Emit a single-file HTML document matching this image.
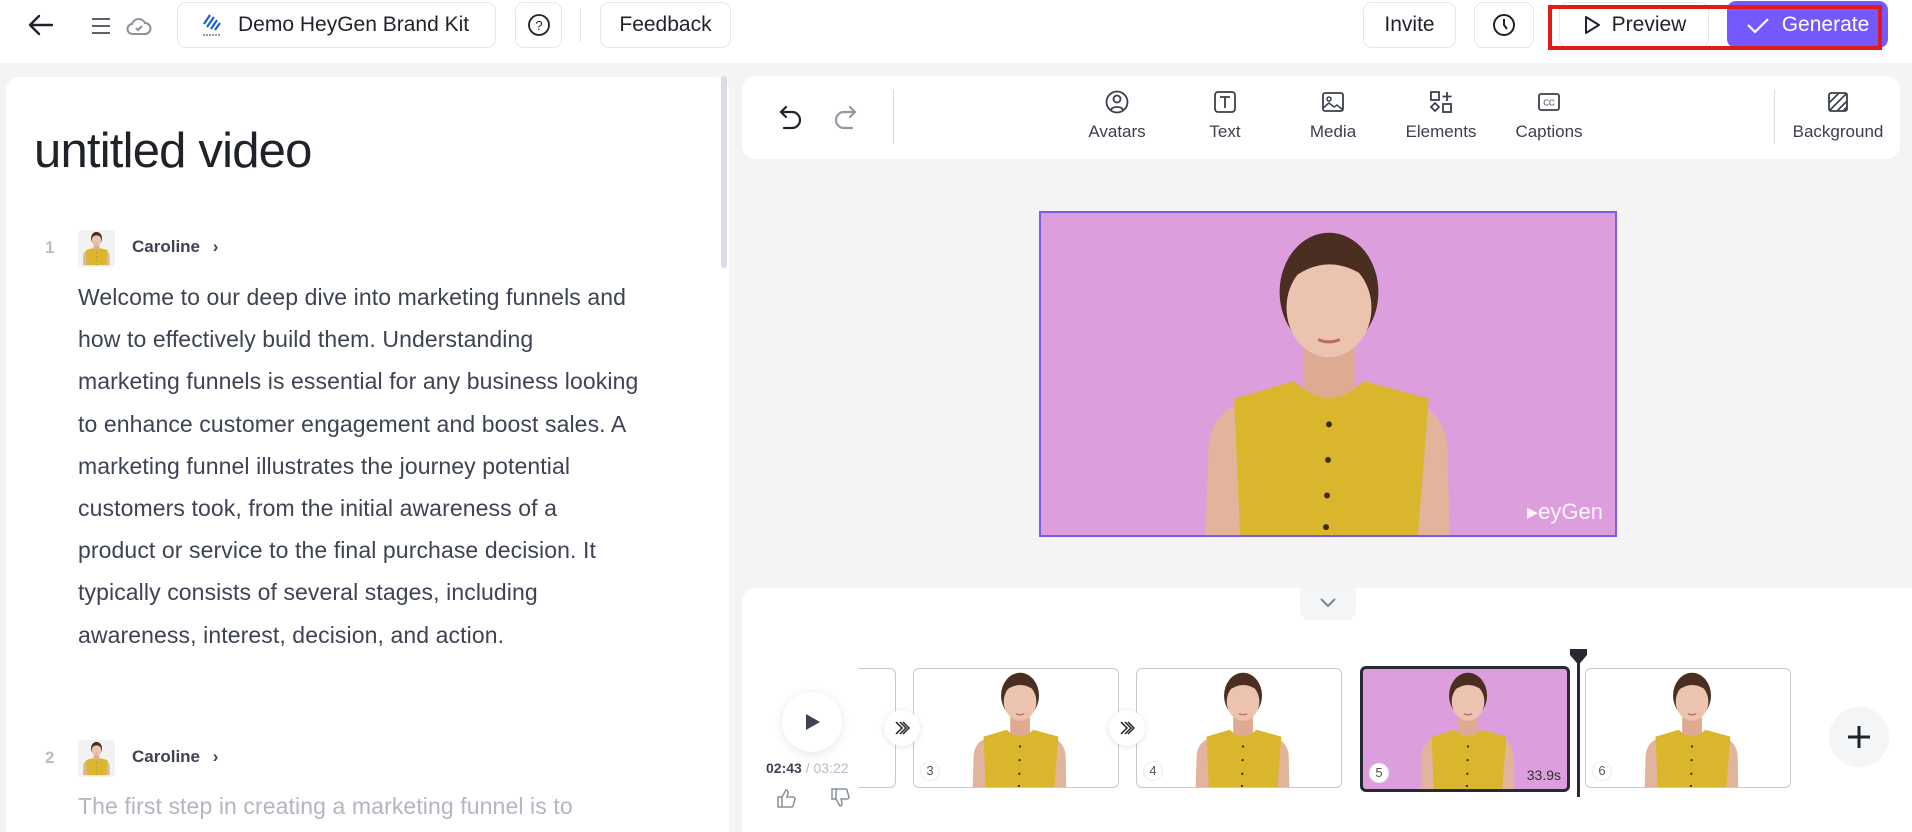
<!DOCTYPE html>
<html style="width:1912px;height:832px;overflow:hidden"><head><meta charset="utf-8"><style>
*{box-sizing:border-box;margin:0;padding:0}
body{width:1912px;height:832px;overflow:hidden;background:#f4f4f4;font-family:"Liberation Sans",sans-serif;color:#1f2329;position:relative}
.a{position:absolute}
.top{left:0;top:0;width:1912px;height:63px;background:#fff}
.btn{position:absolute;border:1px solid #e6e7ea;border-radius:9px;background:#fff;display:flex;align-items:center;justify-content:center;font-size:21px;color:#1f2329}
.card{background:#fff;border-radius:14px}
.tool{position:absolute;top:90px;width:100px;text-align:center;font-size:17px;color:#3a3f4a}
.tool svg{display:block;margin:0 auto 8px}
.p{font-size:23px;line-height:42.2px;color:#3d4352;letter-spacing:0.1px;white-space:nowrap}
.clip{position:absolute;top:668px;height:120px;border:1px solid #c9c7d3;border-radius:6px;background:#fff;overflow:hidden}
.num{position:absolute;left:6px;bottom:6px;width:20px;height:20px;border-radius:10px;background:#fff;border:1px solid #eee;font-size:13px;color:#555;text-align:center;line-height:18px}
</style></head><body>
<svg width="0" height="0" style="position:absolute"><defs>
<g id="pp">
<path d="M165 326 L168 235 Q172 200 205 192 L375 192 Q405 200 410 235 L412 326Z" fill="#e3b49c"/>
<ellipse cx="290" cy="80" rx="50" ry="60" fill="#4a2e22"/>
<rect x="264" y="120" width="52" height="70" fill="#dfaa92"/>
<ellipse cx="290" cy="96" rx="43" ry="50" fill="#ecc3ae"/>
<path d="M248 70 Q290 34 334 70 Q328 38 290 34 Q252 38 248 70Z" fill="#4a2e22"/>
<path d="M194 188 L255 170 Q290 205 325 170 L391 188 L380 326 L200 326Z" fill="#d9b62c"/>
<circle cx="290" cy="214" r="3" fill="#3a2a1a"/><circle cx="289" cy="250" r="3" fill="#3a2a1a"/><circle cx="288" cy="286" r="3" fill="#3a2a1a"/><circle cx="287" cy="318" r="3" fill="#3a2a1a"/>
<path d="M279 128 Q290 133 301 128" stroke="#b86a6a" stroke-width="3" fill="none"/>
</g></defs></svg>

<div class="a top"></div>
<svg class="a" style="left:28px;top:14px" width="26" height="22" viewBox="0 0 26 22"><path d="M24 11H3M11 2L2 11l9 9" stroke="#1f2329" stroke-width="2.4" fill="none" stroke-linecap="round" stroke-linejoin="round"/></svg>
<svg class="a" style="left:90px;top:16px" width="22" height="20"><path d="M2 3h18M2 10h18M2 17h18" stroke="#5b606b" stroke-width="2"/></svg>
<svg class="a" style="left:126px;top:14px" width="26" height="24" viewBox="0 0 26 24"><path d="M7 20a5 5 0 0 1-1-10 7 7 0 0 1 13-1 5 5 0 0 1 0 11z" stroke="#8a8f99" stroke-width="2" fill="none"/><path d="M10 14l2 2 4-4" stroke="#8a8f99" stroke-width="2" fill="none"/></svg>
<div class="btn" style="left:177px;top:2px;width:319px;height:46px;justify-content:flex-start;padding-left:22px"><svg width="24" height="24" viewBox="0 0 24 24"><path d="M10 2l-6 9M14 4l-7 10M17 7l-6 9M20 10l-5 7" stroke="#1d5fd0" stroke-width="2.2"/><path d="M3 22h18" stroke="#333" stroke-width="1" stroke-dasharray="2 1"/></svg><span style="margin-left:14px">Demo HeyGen Brand Kit</span></div>
<div class="btn" style="left:515px;top:2px;width:47px;height:46px"><svg width="24" height="24"><circle cx="12" cy="12" r="10" stroke="#1f2329" stroke-width="1.8" fill="none"/><text x="12" y="17" text-anchor="middle" font-size="13" font-family="Liberation Sans" fill="#1f2329">?</text></svg></div>
<div class="a" style="left:580px;top:8px;width:1px;height:34px;background:#e3e4e8"></div>
<div class="btn" style="left:600px;top:2px;width:131px;height:46px">Feedback</div>
<div class="btn" style="left:1363px;top:2px;width:93px;height:46px">Invite</div>
<div class="btn" style="left:1474px;top:2px;width:60px;height:46px"><svg width="24" height="24"><circle cx="12" cy="12" r="10" stroke="#1f2329" stroke-width="2" fill="none"/><path d="M12 6v6l3 4" stroke="#1f2329" stroke-width="2" fill="none"/></svg></div>
<div class="btn" style="left:1559px;top:2px;width:150px;height:46px"><svg width="20" height="22" viewBox="0 0 20 22"><path d="M4 3l13 8-13 8z" stroke="#1f2329" stroke-width="2" fill="none" stroke-linejoin="round"/></svg><span style="margin-left:10px">Preview</span></div>
<div class="a" style="left:1727px;top:1px;width:161px;height:47px;background:#7559ff;border-radius:9px;color:#fff;font-size:21px;display:flex;align-items:center;justify-content:center"><svg width="24" height="18"><path d="M2 9l7 7L22 3" stroke="#fff" stroke-width="2.2" fill="none"/></svg><span style="margin-left:12px">Generate</span></div>
<div class="a" style="left:1548px;top:5px;width:334px;height:45px;border:4px solid #e01b1b"></div>

<div class="a card" style="left:6px;top:77px;width:723px;height:755px;border-radius:14px 14px 0 0"></div>
<div class="a" style="left:721px;top:76px;width:6px;height:192px;background:#dcdbe8;border-radius:3px"></div>
<div class="a" style="left:34px;top:123px;font-size:49px;letter-spacing:-0.8px;color:#1f2329">untitled video</div>
<div class="a" style="left:45px;top:238px;font-size:17px;color:#b8bcc4;font-weight:bold">1</div>
<svg class="a" style="left:78px;top:230px;border-radius:4px;background:#f2f2f2" width="37" height="37" viewBox="120 10 340 326"><use href="#pp"/></svg>
<div class="a" style="left:132px;top:237px;font-size:17px;font-weight:bold;color:#3d4352">Caroline <span style="margin-left:8px">›</span></div>
<div class="a p" style="left:78px;top:276px">Welcome to our deep dive into marketing funnels and<br>how to effectively build them. Understanding<br>marketing funnels is essential for any business looking<br>to enhance customer engagement and boost sales. A<br>marketing funnel illustrates the journey potential<br>customers took, from the initial awareness of a<br>product or service to the final purchase decision. It<br>typically consists of several stages, including<br>awareness, interest, decision, and action.</div>
<div class="a" style="left:45px;top:748px;font-size:17px;color:#b8bcc4;font-weight:bold">2</div>
<svg class="a" style="left:78px;top:740px;border-radius:4px;background:#f2f2f2" width="37" height="37" viewBox="120 10 340 326"><use href="#pp"/></svg>
<div class="a" style="left:132px;top:747px;font-size:17px;font-weight:bold;color:#3d4352">Caroline <span style="margin-left:8px">›</span></div>
<div class="a p" style="left:78px;top:785px;color:#b3b6bf">The first step in creating a marketing funnel is to</div>

<div class="a card" style="left:742px;top:76px;width:1158px;height:83px"></div>
<svg class="a" style="left:778px;top:104px" width="26" height="28" viewBox="0 0 26 28"><path d="M8 3L3 8l5 5M3 8h11a8 8 0 0 1 0 16H6" stroke="#1f2329" stroke-width="2.2" fill="none" stroke-linecap="round"/></svg>
<svg class="a" style="left:832px;top:104px" width="26" height="28" viewBox="0 0 26 28"><path d="M18 3l5 5-5 5M23 8H12a8 8 0 0 0 0 16h8" stroke="#9499a3" stroke-width="2.2" fill="none" stroke-linecap="round"/></svg>
<div class="a" style="left:893px;top:90px;width:1px;height:54px;background:#d8d9dd"></div>
<div class="tool" style="left:1067px"><svg width="24" height="24"><circle cx="12" cy="12" r="10.5" stroke="#3a3f4a" stroke-width="1.8" fill="none"/><circle cx="12" cy="9" r="3.5" stroke="#3a3f4a" stroke-width="1.8" fill="none"/><path d="M6 20c1-4 11-4 12 0" stroke="#3a3f4a" stroke-width="1.8" fill="none"/></svg>Avatars</div>
<div class="tool" style="left:1175px"><svg width="24" height="24"><rect x="2" y="2" width="20" height="20" rx="3" stroke="#3a3f4a" stroke-width="1.8" fill="none"/><path d="M7 7h10M12 7v11" stroke="#3a3f4a" stroke-width="1.8"/></svg>Text</div>
<div class="tool" style="left:1283px"><svg width="24" height="24"><rect x="2" y="3" width="20" height="18" rx="2" stroke="#3a3f4a" stroke-width="1.8" fill="none"/><circle cx="8" cy="9" r="2" stroke="#3a3f4a" stroke-width="1.5" fill="none"/><path d="M2 18l6-5 5 4 3-2 6 5" stroke="#3a3f4a" stroke-width="1.5" fill="none"/></svg>Media</div>
<div class="tool" style="left:1391px"><svg width="24" height="24"><rect x="2" y="2" width="8" height="8" stroke="#3a3f4a" stroke-width="1.8" fill="none"/><path d="M18 2v9M13.5 6.5h9" stroke="#3a3f4a" stroke-width="1.8"/><path d="M6 13l4 4-4 4-4-4z" stroke="#3a3f4a" stroke-width="1.8" fill="none"/><rect x="14" y="14" width="8" height="8" stroke="#3a3f4a" stroke-width="1.8" fill="none"/></svg>Elements</div>
<div class="tool" style="left:1499px"><svg width="24" height="24"><rect x="2" y="4" width="20" height="16" rx="2" stroke="#3a3f4a" stroke-width="1.8" fill="none"/><text x="12" y="15.5" text-anchor="middle" font-size="8" font-family="Liberation Sans" fill="#3a3f4a">CC</text></svg>Captions</div>
<div class="a" style="left:1774px;top:90px;width:1px;height:54px;background:#d8d9dd"></div>
<div class="tool" style="left:1788px"><svg width="24" height="24"><rect x="3" y="3" width="18" height="18" rx="2" stroke="#3a3f4a" stroke-width="1.8" fill="none"/><path d="M3 13L13 3M3 21L21 3M11 21l10-10M17 21l4-4" stroke="#3a3f4a" stroke-width="1.6"/></svg>Background</div>

<div class="a" style="left:1039px;top:211px;width:578px;height:326px;background:#dc9edc;border:2px solid #7a5cf0;overflow:hidden">
<svg width="574" height="322" viewBox="0 0 578 326" style="display:block"><use href="#pp"/></svg>
<div class="a" style="right:12px;bottom:10px;color:#fff;font-size:22px;opacity:.9">▸eyGen</div>
</div>

<div class="a card" style="left:742px;top:588px;width:1170px;height:244px;border-radius:14px 0 0 0"></div>
<div class="a" style="left:1300px;top:588px;width:56px;height:32px;background:#f4f5f7;border-radius:0 0 10px 10px"><svg style="position:absolute;left:18px;top:8px" width="20" height="14"><path d="M3 3l7 7 7-7" stroke="#7d8290" stroke-width="2" fill="none"/></svg></div>

<div class="clip" style="left:858px;width:38px;border-left:none;border-radius:0 6px 6px 0"></div>
<div class="clip" style="left:913px;width:206px"><svg width="206" height="120" viewBox="19 10 526 316" preserveAspectRatio="xMidYMax meet"><use href="#pp"/></svg><div class="num">3</div></div>
<div class="clip" style="left:1136px;width:206px"><svg width="206" height="120" viewBox="19 10 526 316" preserveAspectRatio="xMidYMax meet"><use href="#pp"/></svg><div class="num">4</div></div>
<div class="clip" style="left:1360px;top:666px;width:210px;height:126px;border:3px solid #262a33;background:#dc9edc"><svg width="204" height="120" viewBox="19 10 526 316" preserveAspectRatio="xMidYMax meet"><use href="#pp"/></svg><div class="num">5</div><div class="a" style="right:6px;bottom:6px;font-size:14px;color:#333">33.9s</div></div>
<div class="clip" style="left:1585px;width:206px"><svg width="206" height="120" viewBox="19 10 526 316" preserveAspectRatio="xMidYMax meet"><use href="#pp"/></svg><div class="num">6</div></div>

<div class="a" style="left:1577px;top:652px;width:3px;height:145px;background:#262a33"></div>
<svg class="a" style="left:1569px;top:648px" width="19" height="18"><path d="M1 1h17v6l-8.5 10L1 7z" fill="#262a33"/></svg>

<div class="a" style="left:884px;top:710px;width:36px;height:36px;border-radius:18px;background:#fff;box-shadow:0 1px 6px rgba(0,0,0,.12)"><svg style="position:absolute;left:10px;top:10px" width="16" height="16"><path d="M2 2l6 6-6 6M6 2l6 6-6 6M9 2l6 6-6 6" stroke="#222" stroke-width="1.5" fill="none"/></svg></div>
<div class="a" style="left:1109px;top:710px;width:36px;height:36px;border-radius:18px;background:#fff;box-shadow:0 1px 6px rgba(0,0,0,.12)"><svg style="position:absolute;left:10px;top:10px" width="16" height="16"><path d="M2 2l6 6-6 6M6 2l6 6-6 6M9 2l6 6-6 6" stroke="#222" stroke-width="1.5" fill="none"/></svg></div>

<div class="a" style="left:782px;top:692px;width:60px;height:60px;border-radius:30px;background:#fff;box-shadow:0 2px 10px rgba(0,0,0,.1)"><svg style="position:absolute;left:22px;top:20px" width="18" height="20"><path d="M2 2l14 8-14 8z" fill="#3d4352"/></svg></div>
<div class="a" style="left:766px;top:760px;font-size:14px;font-weight:bold;color:#3d4352">02:43 <span style="font-weight:normal;color:#b7b9c8">/ 03:22</span></div>
<svg class="a" style="left:775px;top:787px" width="22" height="22"><path d="M3 10h4v10H3zM7 10l4-7c2 0 2 2 2 3l-1 4h6c1 0 2 1 2 2l-2 7c0 1-1 1-2 1H7" stroke="#8a8f99" stroke-width="1.5" fill="none"/></svg>
<svg class="a" style="left:829px;top:787px" width="22" height="22"><path d="M3 2h4v10H3zM7 12l4 7c2 0 2-2 2-3l-1-4h6c1 0 2-1 2-2l-2-7c0-1-1-1-2-1H7" stroke="#8a8f99" stroke-width="1.5" fill="none"/></svg>

<div class="a" style="left:1829px;top:707px;width:60px;height:60px;border-radius:30px;background:#f4f5f7"><svg style="position:absolute;left:18px;top:18px" width="24" height="24"><path d="M12 1v22M1 12h22" stroke="#1f2329" stroke-width="3"/></svg></div>
</body></html>
